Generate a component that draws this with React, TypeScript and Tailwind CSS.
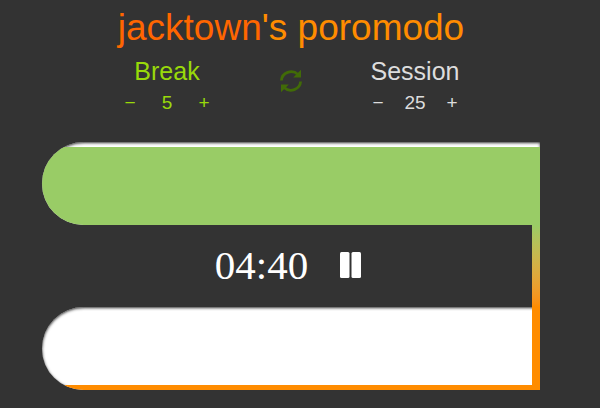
import { useState } from "react";

type CounterProps = {
  label: string;
  value: number;
  onChange: (value: number) => void;
  tone: string;
};

function Counter({ label, value, onChange, tone }: CounterProps) {
  return (
    <section aria-label={label} className={`flex flex-col items-center ${tone}`}>
      <h2 className="text-[25px] leading-8">{label}</h2>
      <div className="grid grid-cols-[37px_37px_37px] text-center text-[19px] leading-8">
        <button aria-label={`Decrease ${label}`} onClick={() => onChange(value - 1)}>
          −
        </button>
        <output>{value}</output>
        <button aria-label={`Increase ${label}`} onClick={() => onChange(value + 1)}>
          +
        </button>
      </div>
    </section>
  );
}

function RefreshIcon() {
  return (
    <svg viewBox="0 0 24 24" className="size-6" fill="none" stroke="currentColor" strokeWidth="2.8">
      <path d="M2.4 11.5A9.8 9.4 0 0 1 19 5.4" />
      <path d="M21.6 12.5A9.8 9.4 0 0 1 5 18.6" />
      <path d="M22 .8V8.6H14.2Z" fill="currentColor" stroke="none" />
      <path d="M2 23.2V15.4H9.8Z" fill="currentColor" stroke="none" />
    </svg>
  );
}

function PauseIcon() {
  return (
    <svg viewBox="0 0 21 26" className="h-[26px] w-[21px]" fill="currentColor">
      <rect width="9.5" height="26" rx="1.5" />
      <rect x="11.5" width="9.5" height="26" rx="1.5" />
    </svg>
  );
}

export default function App() {
  const [rest, setRest] = useState(5);
  const [work, setWork] = useState(25);
  const [running, setRunning] = useState(true);

  return (
    <main className="min-h-screen bg-[#333333] pt-1 pr-[60px] pb-[18px] pl-[42px] font-['Liberation_Sans',Arial,sans-serif]">
      <h1 className="text-center text-[37px] leading-[48px] whitespace-nowrap text-[#ff8c00]">
        <span className="text-[#ff6600]">jacktown</span>'s poromodo
      </h1>

      <div className="mt-[3px] grid grid-cols-[124px_124px_124px] justify-center">
        <Counter label="Break" value={rest} onChange={setRest} tone="text-[#99d90a]" />
        <button aria-label="Reset" className="mt-3.5 self-start justify-self-center text-[#416b07]">
          <RefreshIcon />
        </button>
        <Counter label="Session" value={work} onChange={setWork} tone="text-[#dddddd]" />
      </div>

      <div className="mt-[23px]">
        <div className="h-[83px] overflow-hidden rounded-l-full rounded-tr-sm bg-white pt-[5px] shadow-[inset_0_1px_3px_#333333]">
          <div className="h-full bg-[#99cc66]" />
        </div>
        <div className="flex h-[82px]">
          <div className="flex flex-1 items-center justify-center pb-0.5 pl-0.5 text-white">
            <time className="mr-8 font-['Liberation_Serif','Times_New_Roman',serif] text-[41px] leading-none">
              04:40
            </time>
            <button aria-label={running ? "Pause" : "Resume"} onClick={() => setRunning(!running)}>
              <PauseIcon />
            </button>
          </div>
          <div className="w-2 bg-linear-to-b from-[#99cc66] to-[#ff8c00]" />
        </div>
        <div className="h-[83px] overflow-hidden rounded-l-full bg-white shadow-[inset_0_1px_3px_#333333]">
          <div className="h-full border-r-8 border-b-[5px] border-[#ff8c00]" />
        </div>
      </div>
    </main>
  );
}
